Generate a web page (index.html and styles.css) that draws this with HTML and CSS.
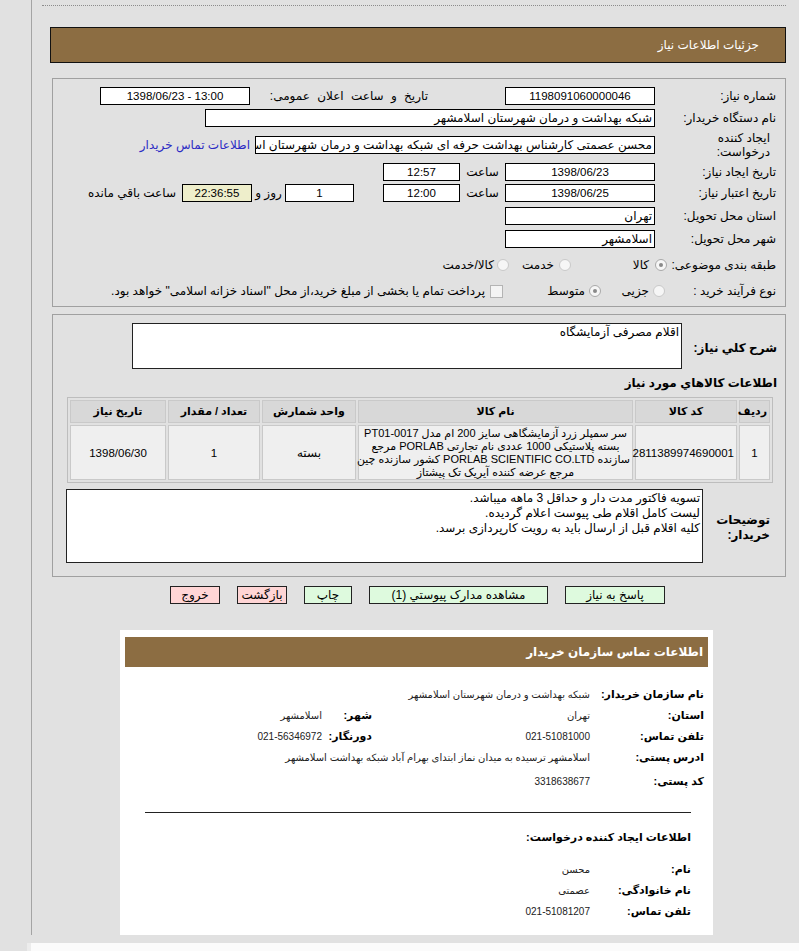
FILE: index.html
```html
<!DOCTYPE html>
<html lang="fa" dir="rtl">
<head>
<meta charset="utf-8">
<title>جزئیات اطلاعات نیاز</title>
<link rel="stylesheet" href="styles.css">
</head>
<body>
<div class="page">
  <div class="dots"></div>
  <div class="titlebar">جزئیات اطلاعات نیاز</div>

  <div class="panel p1">
    <div class="row r1">
      <div class="lbl">شماره نیاز:</div>
      <div class="inp w150 c num">1198091060000046</div>
      <div class="lbl2">تاریخ و ساعت اعلان عمومی:</div>
      <div class="inp w150 c num" dir="ltr">1398/06/23 - 13:00</div>
    </div>
    <div class="row r2">
      <div class="lbl">نام دستگاه خریدار:</div>
      <div class="inp w450">شبکه بهداشت و درمان شهرستان اسلامشهر</div>
    </div>
    <div class="row r3">
      <div class="lbl two">ایجاد کننده<br>درخواست:</div>
      <div class="inp w400">محسن عصمتی کارشناس بهداشت حرفه ای شبکه بهداشت و درمان شهرستان اسلامشهر</div>
      <a class="link" href="#">اطلاعات تماس خریدار</a>
    </div>
    <div class="row r4">
      <div class="lbl">تاریخ ایجاد نیاز:</div>
      <div class="inp w150 c num">1398/06/23</div>
      <div class="sa">ساعت</div>
      <div class="inp w77 c num">12:57</div>
    </div>
    <div class="row r5">
      <div class="lbl">تاریخ اعتبار نیاز:</div>
      <div class="inp w150 c num">1398/06/25</div>
      <div class="sa">ساعت</div>
      <div class="inp w77 c num">12:00</div>
      <div class="inp w69 c num days">1</div>
      <div class="rz">روز و</div>
      <div class="inp w70 c num remain">22:36:55</div>
      <div class="rem">ساعت باقي مانده</div>
    </div>
    <div class="row r6">
      <div class="lbl">استان محل تحویل:</div>
      <div class="inp w150">تهران</div>
    </div>
    <div class="row r7">
      <div class="lbl">شهر محل تحویل:</div>
      <div class="inp w150">اسلامشهر</div>
    </div>
    <div class="row r8">
      <div class="lbl">طبقه بندی موضوعی:</div>
      <div class="opt o1"><span class="radio on"></span><span>کالا</span></div>
      <div class="opt o2"><span class="radio"></span><span>خدمت</span></div>
      <div class="opt o3"><span class="radio"></span><span>کالا/خدمت</span></div>
    </div>
    <div class="row r9">
      <div class="lbl">نوع فرآیند خرید :</div>
      <div class="opt q1"><span class="radio"></span><span>جزیی</span></div>
      <div class="opt q2"><span class="radio on"></span><span>متوسط</span></div>
      <div class="opt q3"><span class="check"></span><span>پرداخت تمام یا بخشی از مبلغ خرید،از محل "اسناد خزانه اسلامی" خواهد بود.</span></div>
    </div>
  </div>

  <div class="panel p2">
    <div class="descrow">
      <div class="blbl">شرح کلي نیاز:</div>
      <div class="ta ta1">اقلام مصرفی آزمایشگاه</div>
    </div>
    <div class="heading">اطلاعات کالاهاي مورد نیاز</div>
    <table class="items">
      <thead>
        <tr>
          <th class="c1">ردیف</th>
          <th class="c2">کد کالا</th>
          <th class="c3">نام کالا</th>
          <th class="c4">واحد شمارش</th>
          <th class="c5">تعداد / مقدار</th>
          <th class="c6">تاریخ نیاز</th>
        </tr>
      </thead>
      <tbody>
        <tr>
          <td class="num">1</td>
          <td class="num">2811389974690001</td>
          <td class="name">سر سمپلر زرد آزمایشگاهی سایز 200 ام مدل PT01-0017<br>بسته پلاستیکی 1000 عددی نام تجارتی PORLAB مرجع<br>سازنده PORLAB SCIENTIFIC CO.LTD کشور سازنده چین<br>مرجع عرضه کننده آیریک تک پیشتاز</td>
          <td>بسته</td>
          <td class="num">1</td>
          <td class="num">1398/06/30</td>
        </tr>
      </tbody>
    </table>
    <div class="notesrow">
      <div class="blbl nlbl">توضیحات<br>خریدار:</div>
      <div class="ta ta2">تسویه فاکتور مدت دار و حداقل 3 ماهه میباشد.<br>لیست کامل اقلام طی پیوست اعلام گردیده.<br>کلیه اقلام قبل از ارسال باید به رویت کارپردازی برسد.</div>
    </div>
  </div>

  <div class="buttons">
    <span class="btn green b1">پاسخ به نیاز</span>
    <span class="btn green b2">مشاهده مدارک پیوستي (1)</span>
    <span class="btn green b3">چاپ</span>
    <span class="btn pink b4">بازگشت</span>
    <span class="btn pink b5">خروج</span>
  </div>

  <div class="card">
    <div class="cardhead">اطلاعات تماس سازمان خریدار</div>
    <div class="crow first">
      <div class="clbl">نام سازمان خریدار:</div>
      <div class="cval">شبکه بهداشت و درمان شهرستان اسلامشهر</div>
    </div>
    <div class="crow">
      <div class="clbl">استان:</div>
      <div class="cval v1">تهران</div>
      <div class="clbl l2">شهر:</div>
      <div class="cval">اسلامشهر</div>
    </div>
    <div class="crow">
      <div class="clbl">تلفن تماس:</div>
      <div class="cval v1">021-51081000</div>
      <div class="clbl l2">دورنگار:</div>
      <div class="cval">021-56346972</div>
    </div>
    <div class="crow">
      <div class="clbl">ادرس پستی:</div>
      <div class="cval">اسلامشهر ترسیده به میدان نماز ابتدای بهرام آباد شبکه بهداشت اسلامشهر</div>
    </div>
    <div class="crow postal">
      <div class="clbl">کد پستی:</div>
      <div class="cval">3318638677</div>
    </div>
    <div class="sep"></div>
    <div class="chead2">اطلاعات ایجاد کننده درخواست:</div>
    <div class="crow c2row first2">
      <div class="clbl">نام:</div>
      <div class="cval">محسن</div>
    </div>
    <div class="crow c2row">
      <div class="clbl">نام خانوادگی:</div>
      <div class="cval">عصمتی</div>
    </div>
    <div class="crow c2row">
      <div class="clbl">تلفن تماس:</div>
      <div class="cval">021-51081207</div>
    </div>
  </div>
</div>
<div class="footer"></div>
</body>
</html>
```

FILE: styles.css
```css
* { box-sizing: border-box; }

html, body {
  margin: 0;
  padding: 0;
  background: #e1e1e1;
}

body {
  font-family: "Liberation Sans", "DejaVu Sans", sans-serif;
  font-size: 11px;
  color: #000;
  overflow: hidden;
}

.page {
  margin-left: 31px;
  border-left: 1px solid #a4a4a4;
  padding: 5px 13px 0 10px;
  height: 935px;
}

.footer {
  margin: 8px 0 0 27px;
  height: 20px;
  border-left: 4px solid #ececec;
  background: #fbfbfb;
}

.dots {
  border-top: 1px dotted #8c8c8c;
}

.titlebar {
  margin: 21px 0 0 8px;
  height: 36px;
  background: #8c6d42;
  border: 1px solid #111;
  color: #fff;
  font-size: 12px;
  line-height: 34px;
  padding-right: 26px;
}

.panel {
  margin-left: 10px;
  border: 1px solid #a0a0a0;
}

/* ---------- panel 1 ---------- */
.p1 {
  margin-top: 15px;
  height: 229px;
  padding: 6px 9px 0 0;
}

.row {
  display: flex;
  align-items: center;
  height: 22px;
  white-space: nowrap;
}
.r3 { height: 32px; }
.r4 { height: 21px; }
.r6, .r7 { height: 23px; }
.r8 { height: 30px; }

.lbl {
  width: 121px;
  flex: none;
  text-align: right;
  font-size: 12px;
}
.lbl.two {
  line-height: 14px;
  white-space: normal;
  padding-right: 6px;
}

.inp {
  flex: none;
  height: 18px;
  border: 1px solid #000;
  background: #fff;
  line-height: 16px;
  padding: 0 2px;
  overflow: hidden;
  white-space: nowrap;
  font-size: 12px;
  text-align: right;
}
.inp.c { text-align: center; }
.num { font-size: 11.5px; }
.w150 { width: 150px; }
.w450 { width: 450px; }
.w400 { width: 400px; }
.w77 { width: 77px; }
.w69 { width: 69px; }
.w70 { width: 70px; }

.lbl2 {
  width: 176px;
  margin-right: 77px;
  text-align: right;
  margin-left: 2px;
  font-size: 12px;
  word-spacing: 4px;
}

.link {
  margin-right: 5px;
  color: #2b2bc4;
  text-decoration: none;
  font-size: 12px;
}

.sa {
  width: 45px;
  text-align: center;
  font-size: 12px;
}
.days { margin-right: 29px; }
.rz {
  width: 33px;
  text-align: center;
  font-size: 12px;
}
.remain { background: #eeeecb; }
.rem { margin-right: 6px; font-size: 12px; }

.opt {
  display: flex;
  align-items: center;
  flex: none;
  font-size: 12px;
}
.o1 { width: 85px; margin-right: -15px; }
.o1 .radio { margin: 0 3px 0 6px; }
.o2 { width: 73px; }
.o2 .radio { margin: 0 14px 0 5px; }
.o3 .radio { margin: 0 3px 0 3px; }
.q1 { width: 66px; margin-right: -15px; }
.q1 .radio { margin: 0 5px 0 4px; }
.q2 { width: 98px; }
.q2 .radio { margin: 0 3px 0 4px; }
.q3 .check { margin: 0 3px 0 5px; }

.radio {
  display: inline-block;
  width: 12px;
  height: 12px;
  border-radius: 50%;
  border: 1px solid #c9c9c9;
  background: #f6f6f6;
  position: relative;
  flex: none;
}
.radio.on {
  border-color: #a9a9a9;
}
.radio.on::after {
  content: "";
  position: absolute;
  left: 3px;
  top: 3px;
  width: 4px;
  height: 4px;
  border-radius: 50%;
  background: #8a8a8a;
}
.check {
  display: inline-block;
  width: 13px;
  height: 13px;
  border: 1px solid #b4b4b4;
  background: #f4f4f4;
  flex: none;
}

/* ---------- panel 2 ---------- */
.p2 {
  margin-top: 7px;
  height: 263px;
  padding: 8px 8px 0 0;
}

.descrow {
  display: flex;
  align-items: center;
  height: 46px;
}
.blbl {
  width: 95px;
  flex: none;
  text-align: right;
  font-weight: bold;
  font-size: 12px;
  padding-top: 4px;
}

.ta {
  flex: none;
  background: #fff;
  border: 1px solid #222;
  font-size: 12px;
  line-height: 15px;
  padding: 1px 2px;
  text-align: right;
  position: relative;
}
.ta::after {
  content: "";
  position: absolute;
  left: 2px;
  bottom: 2px;
  width: 4px;
  height: 7px;
  background-image: radial-gradient(circle, #bcbcbc 0.6px, transparent 0.7px);
  background-size: 2px 2px;
}
.ta1 { width: 550px; height: 46px; }

.heading {
  margin-top: 6px;
  height: 16px;
  line-height: 16px;
  font-weight: bold;
  font-size: 12px;
}

.items {
  margin-top: 6px;
  margin-right: 4px;
  width: 706px;
  table-layout: fixed;
  border: 1px solid #bdbdbd;
  border-spacing: 2px;
  font-size: 11px;
}
.items th, .items td {
  border: 1px solid #c9c9c9;
  text-align: center;
  padding: 0 2px;
}
.items th {
  background: #d8d8d8;
  font-weight: bold;
  height: 23px;
}
.items td {
  background: #efefef;
  height: 55px;
  font-size: 12px;
}
.items td.num { font-size: 11.5px; }
.items td.name {
  line-height: 13px;
  white-space: nowrap;
  font-size: 11px;
}
.c1 { width: 31px; }
.c2 { width: 102px; }
.c3 { width: 275px; }
.c4 { width: 94px; }
.c5 { width: 92px; }
.c6 { width: 96px; }

.notesrow {
  display: flex;
  align-items: center;
  margin-top: 6px;
  height: 74px;
}
.nlbl {
  width: 74px;
  padding-right: 7px;
  line-height: 15px;
}
.ta2 { width: 637px; height: 74px; }

/* ---------- buttons ---------- */
.buttons {
  display: flex;
  gap: 17px;
  margin-top: 9px;
  padding-right: 121px;
  height: 18px;
}
.btn {
  display: inline-block;
  height: 18px;
  line-height: 16px;
  border: 1px solid #222;
  text-align: center;
  font-size: 12px;
  flex: none;
}
.green { background: #defade; }
.pink { background: #ffd5d5; }
.b1 { width: 100px; }
.b2 { width: 179px; }
.b3 { width: 48px; }
.b4 { width: 50px; }
.b5 { width: 50px; }

/* ---------- contact card ---------- */
.card {
  margin: 26px 73px 0 0;
  width: 593px;
  height: 305px;
  background: #fff;
  padding: 7px 5px 0 5px;
}
.cardhead {
  height: 30px;
  background: #8c6d42;
  color: #fff;
  font-weight: bold;
  font-size: 12px;
  line-height: 30px;
  padding-right: 5px;
}
.crow {
  display: flex;
  align-items: center;
  height: 21px;
  padding-right: 4px;
  white-space: nowrap;
}
.crow.first { margin-top: 17px; }
.crow.postal { margin-top: 3px; }
.crow.first2 { margin-top: 14px; }
.clbl {
  width: 114px;
  flex: none;
  text-align: right;
  font-weight: bold;
  font-size: 11px;
}
.crow.c2row { padding-right: 17px; }
.crow.c2row .clbl { width: 101px; }
.cval {
  font-size: 10px;
  color: #222;
}
.cval.v1 { width: 218px; flex: none; }
.clbl.l2 { width: 50px; }

.sep {
  margin: 20px 17px 0 20px;
  border-top: 1px solid #222;
}
.chead2 {
  margin-top: 16px;
  height: 16px;
  line-height: 16px;
  padding-right: 17px;
  font-weight: bold;
  font-size: 11px;
}
```
